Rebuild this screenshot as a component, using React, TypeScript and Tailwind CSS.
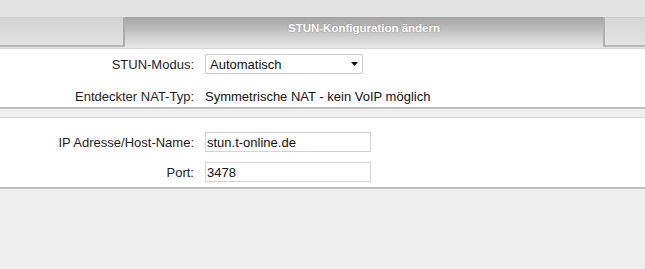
import React from 'react';

const font = { fontFamily: '"Liberation Sans", Arial, sans-serif' };

function Row({ label, children }: { label: string; children: React.ReactNode }) {
  return (
    <div className="flex items-center h-[20px] gap-[11px]">
      <div className="w-[194px] text-right text-[13px] text-[#1e1e1e] leading-none">{label}</div>
      {children}
    </div>
  );
}

export default function App() {
  return (
    <div className="w-[645px] h-[269px] bg-[#efefef] overflow-hidden" style={font}>
      {/* top area */}
      <div className="h-[17px] bg-[#e4e4e4]" />

      {/* tab bar */}
      <div className="flex h-[31px] bg-[#e4e4e4]">
        <div className="w-[125px] h-[30px] border-t border-[#cbcbcb] border-r-2 border-r-[#acacac] border-b-2 border-b-[#b8b8b8] bg-gradient-to-b from-[#d3d3d3] to-[#e2e2e2]" />
        <div className="w-[478px] h-[31px] bg-gradient-to-b from-[#a3a3a3] to-[#e9e9e9] flex justify-center pt-[4px]">
          <span className="text-white font-bold text-[11.5px] leading-[14px] [text-shadow:0_0_2px_rgba(90,90,90,0.5)]">
            STUN-Konfiguration ändern
          </span>
        </div>
        <div className="flex-1 h-[30px] border-t border-[#cbcbcb] border-l-2 border-l-[#b0b0b0] border-b-2 border-b-[#b8b8b8] bg-gradient-to-b from-[#d6d6d6] to-[#e4e4e4]" />
      </div>
      <div className="h-px bg-[#d4d4d4]" />

      {/* panel 1 */}
      <div className="bg-white pt-[5px] pb-[1px] flex flex-col gap-[12px] border-b-2 border-[#bdbdbd]">
        <Row label="STUN-Modus:">
          <div className="w-[158px] h-[20px] border border-[#c9c9c9] rounded-[2px] bg-white flex items-center justify-between pl-[4px] pr-[4px]">
            <span className="text-[13px] text-[#111] leading-none">Automatisch</span>
            <svg width="7" height="4" viewBox="0 0 7 4">
              <path d="M0 0h7L3.5 4z" fill="#111" />
            </svg>
          </div>
        </Row>
        <Row label="Entdeckter NAT-Typ:">
          <span className="text-[13px] text-[#111] leading-none">Symmetrische NAT - kein VoIP möglich</span>
        </Row>
      </div>

      {/* gap strip */}
      <div className="h-[8px] bg-[#efefef] border-b border-[#d6d6d6] box-content" />

      {/* panel 2 */}
      <div className="bg-white pt-[14px] pb-[5px] flex flex-col gap-[10px] border-b-2 border-[#bdbdbd]">
        <Row label="IP Adresse/Host-Name:">
          <input
            readOnly
            value="stun.t-online.de"
            className="w-[166px] h-[20px] border border-[#d2d2d2] bg-white px-[1px] text-[13px] text-[#111] outline-none"
            style={font}
          />
        </Row>
        <Row label="Port:">
          <input
            readOnly
            value="3478"
            className="w-[166px] h-[20px] border border-[#d2d2d2] bg-white px-[1px] text-[13px] text-[#111] outline-none"
            style={font}
          />
        </Row>
      </div>
    </div>
  );
}
